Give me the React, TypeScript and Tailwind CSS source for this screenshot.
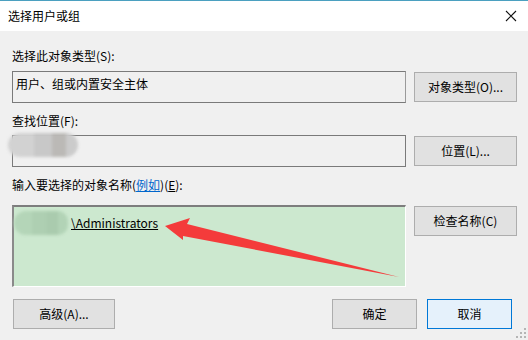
import { ReactNode } from 'react';

const font = { fontFamily: '"Noto Sans CJK SC", "Noto Sans", sans-serif' };

function Btn({
  children,
  className = '',
  primary = false
}: {
  children: ReactNode;
  className?: string;
  primary?: boolean;
}) {
  return (
    <button
      type="button"
      className={
        'flex h-[30px] shrink-0 items-center justify-center border text-[12px] leading-none text-black ' +
        (primary
          ? 'border-[#0078d7] bg-[#e5f1fb] '
          : 'border-[#adadad] bg-[#e1e1e1] ') +
        className
      }
    >
      {children}
    </button>
  );
}

function Label({ children, className = '' }: { children: ReactNode; className?: string }) {
  return (
    <div className={'h-[16px] text-[12px] leading-[16px] text-black ' + className}>
      {children}
    </div>
  );
}

// blurred-out part of the account name (grey, in the location box)
function GreySmudge() {
  return (
    <div className="pointer-events-none absolute left-[-5px] top-[-3px] flex blur-[1.5px]">
      <div className="h-[24px] w-[26px] rounded-l-full bg-[#d2d2d2]" />
      <div className="h-[24px] w-[18px] bg-[#c8c8c8]" />
      <div className="h-[24px] w-[14px] bg-[#bbb9b6]" />
      <div className="h-[24px] w-[12px] rounded-r-full bg-[#cbcbcb]" />
    </div>
  );
}

// blurred-out machine name in the green box
function GreenSmudge() {
  return (
    <div className="pointer-events-none absolute left-[0px] top-[4px] flex blur-[1.5px]">
      <div className="h-[24px] w-[18px] rounded-l-full bg-[#b4d5b8]" />
      <div className="h-[24px] w-[14px] bg-[#aecfb2]" />
      <div className="h-[24px] w-[12px] bg-[#aacbae]" />
      <div className="h-[24px] w-[10px] rounded-r-full bg-[#b2d3b6]" />
    </div>
  );
}

export default function App() {
  return (
    <div className="relative h-[340px] w-[528px] overflow-hidden bg-[#f0f0f0]" style={font}>
      {/* title bar */}
      <div className="flex h-[31px] items-center justify-between border-t border-[#4ba0c0] bg-white pl-[8px] pr-[10px]">
        <span className="text-[12px] text-black">选择用户或组</span>
        <svg width="12" height="12" viewBox="0 0 12 12" className="mr-[1px]">
          <path d="M1 1L11 11M11 1L1 11" stroke="#111" strokeWidth="1.1" />
        </svg>
      </div>

      <div className="flex flex-col pl-[12px] pr-[11px]">
        <Label className="mt-[17px]">选择此对象类型(S):</Label>
        <div className="mt-[7px] flex items-start gap-[8px]">
          <div className="h-[32px] w-[394px] shrink-0 border border-[#7a7a7a] border-r-[#9a9a9a] px-[3px] pt-[3px] text-[12px] text-black">
            用户、组或内置安全主体
          </div>
          <Btn className="mt-[1px] w-[103px]">对象类型(O)...</Btn>
        </div>

        <Label className="mt-[10px]">查找位置(F):</Label>
        <div className="mt-[6px] flex items-start gap-[8px]">
          <div className="relative h-[32px] w-[394px] shrink-0 border border-[#7a7a7a]">
            <GreySmudge />
          </div>
          <Btn className="mt-[1px] w-[103px]">位置(L)...</Btn>
        </div>

        <Label className="mt-[10px]">
          输入要选择的对象名称(
          <span className="text-[#0066cc] underline">例如</span>
          )(<span className="underline">E</span>):
        </Label>
        <div className="mt-[12px] flex items-start gap-[8px]">
          <div className="relative h-[82px] w-[394px] shrink-0 border-t-2 border-l-2 border-r border-b border-t-[#7d7d7d] border-l-[#8a8a8a] border-r-white border-b-white bg-[#cce8cf]">
            <GreenSmudge />
            <div className="ml-[57px] mt-[8px] text-[12px] leading-[16px] text-black underline">
              \Administrators
            </div>
          </div>
          <Btn className="mt-[1px] w-[103px]">检查名称(C)</Btn>
        </div>

        <div className="mr-[5px] mt-[12px] flex items-center">
          <Btn className="ml-[1px] w-[102px]">高级(A)...</Btn>
          <Btn className="ml-auto w-[85px]">确定</Btn>
          <Btn primary className="ml-[10px] w-[85px]">取消</Btn>
        </div>
      </div>

      {/* size grip */}
      <svg width="12" height="12" viewBox="0 0 12 12" className="absolute bottom-[1px] right-[1px]">
        {[
          [9, 1],
          [9, 5],
          [5, 5],
          [9, 9],
          [5, 9],
          [1, 9]
        ].map(([x, y]) => (
          <rect key={`${x}-${y}`} x={x} y={y} width="2" height="2" fill="#b5b5b5" />
        ))}
      </svg>

      {/* red annotation arrow */}
      <svg width="528" height="340" className="pointer-events-none absolute left-0 top-0">
        <polygon
          points="165,226 190,218 187,224 399,277 183,236 183,240"
          fill="#f43b3b"
        />
      </svg>
    </div>
  );
}
